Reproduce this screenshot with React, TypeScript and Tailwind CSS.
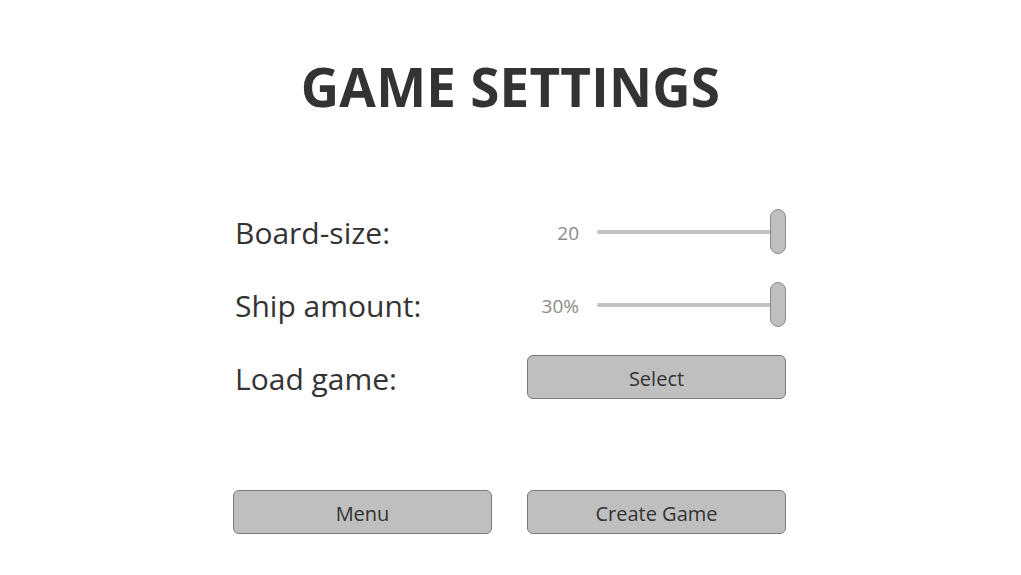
const font = { fontFamily: '"Open Sans", "Noto Sans", sans-serif' };

function SliderRow({ label, value }: { label: string; value: string }) {
  return (
    <div className="flex items-center h-[45px]">
      <div className="w-[294px] pl-[2px] pt-[2px] text-[30px] text-[#333333] leading-none">{label}</div>
      <div className="flex items-center w-[259px]">
        <div className="w-[52px] pt-[3px] text-right text-[19px] text-[#8a8a8a] leading-none">{value}</div>
        <div className="relative ml-[18px] flex-1 h-[45px] flex items-center">
          <div className="h-[4px] w-[181px] bg-[#c2c2c2] rounded-full" />
          <div className="absolute right-0 top-0 w-[16px] h-[45px] rounded-full bg-[#bfbfbf] border border-[#8a8a8a]" />
        </div>
      </div>
    </div>
  );
}

function Button({ children }: { children: string }) {
  return (
    <button className="w-[259px] h-[44px] pt-[3px] rounded-[6px] bg-[#bfbfbf] border border-[#7a7a7a] text-[20px] text-[#333333] leading-none">
      {children}
    </button>
  );
}

export default function App() {
  return (
    <div className="min-h-screen w-full bg-white" style={font}>
      <h1 className="pt-[60px] text-center text-[53px] font-bold text-[#333333] leading-none tracking-[0.2px]">
        GAME SETTINGS
      </h1>
      <div className="w-[553px] mx-auto mt-[96px] flex flex-col -translate-x-px">
        <div className="flex flex-col gap-[28px]">
          <SliderRow label="Board-size:" value="20" />
          <SliderRow label="Ship amount:" value="30%" />
          <div className="flex items-center h-[44px]">
            <div className="w-[294px] pl-[2px] pt-[4px] text-[30px] text-[#333333] leading-none">Load game:</div>
            <Button>Select</Button>
          </div>
        </div>
        <div className="flex justify-between mt-[91px]">
          <Button>Menu</Button>
          <Button>Create Game</Button>
        </div>
      </div>
    </div>
  );
}
